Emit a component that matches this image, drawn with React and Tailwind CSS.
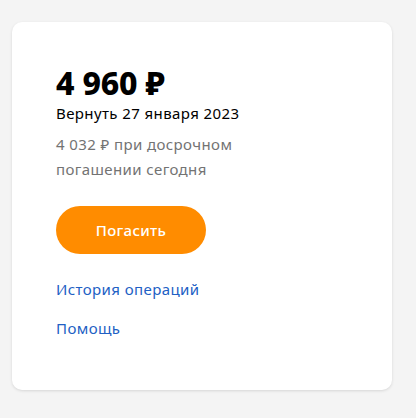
export default function App() {
  return (
    <div className="min-h-[418px] w-[416px] bg-[#f4f4f4] pt-[22px] pl-[12px]" style={{ fontFamily: '"Noto Sans", Inter, sans-serif' }}>
      <div className="w-[380px] h-[368px] rounded-[10px] bg-white shadow-[0_1px_3px_rgba(0,0,0,0.12)] pl-[44px] pt-[41px]">
        <div className="text-[32px] leading-[40px] font-extrabold text-black tracking-[-0.2px]">4 960 ₽</div>
        <div className="text-[15px] leading-[20px] text-black tracking-[0.4px]">Вернуть 27 января 2023</div>
        <div className="text-[15px] leading-[25px] text-[#737373] mt-[9px] w-[230px] tracking-[0.4px]">
          4 032 ₽ при досрочном погашении сегодня
        </div>
        <button className="mt-[24px] w-[150px] h-[48px] rounded-full bg-[#ff8c00] text-white text-[15px] font-medium tracking-[0.3px]">
          Погасить
        </button>
        <div className="mt-[25px] flex flex-col gap-[19px] tracking-[0.4px]">
          <a className="text-[15px] leading-[20px] text-[#2160c4]">История операций</a>
          <a className="text-[15px] leading-[20px] text-[#2160c4]">Помощь</a>
        </div>
      </div>
    </div>
  );
}
